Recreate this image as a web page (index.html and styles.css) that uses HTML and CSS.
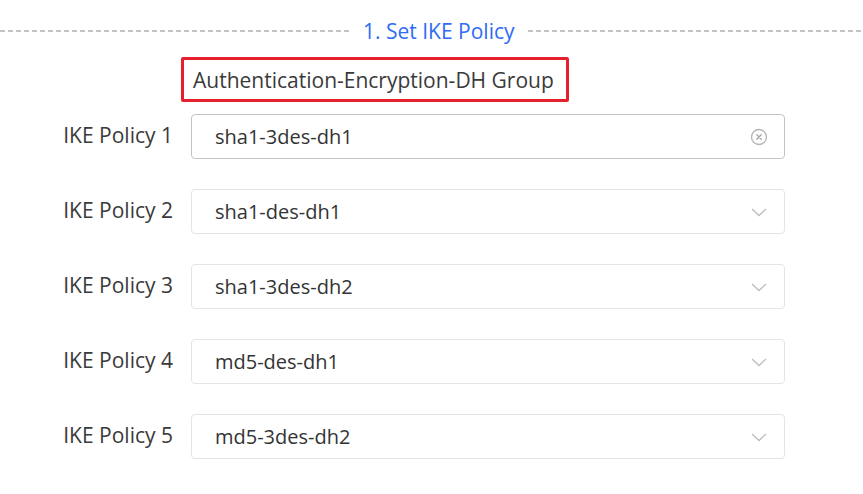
FILE: index.html
```html
<!DOCTYPE html>
<html>
<head>
<meta charset="utf-8">
<link rel="stylesheet" href="styles.css">
</head>
<body>
<div class="page">
  <div class="section-title">
    <span class="line line-left"></span>
    <span class="title-text">1. Set IKE Policy</span>
    <span class="line line-right"></span>
  </div>
  <div class="header-row">
    <div class="highlight">Authentication-Encryption-DH Group</div>
  </div>
  <div class="form">
    <div class="row">
      <label class="label">IKE Policy 1</label>
      <div class="select hover">
        <span class="value">sha1-3des-dh1</span>
        <svg class="icon" width="18" height="18" viewBox="0 0 18 18"><circle cx="9" cy="9" r="7.5" fill="none" stroke="#b4b4b4" stroke-width="1.3"/><path d="M6.8 6.8 L11.2 11.2 M11.2 6.8 L6.8 11.2" stroke="#a8a8a8" stroke-width="1.4" stroke-linecap="round"/></svg>
      </div>
    </div>
    <div class="row">
      <label class="label">IKE Policy 2</label>
      <div class="select">
        <span class="value">sha1-des-dh1</span>
        <svg class="icon" width="18" height="18" viewBox="0 0 18 18"><path d="M2 6 L9 12.5 L16 6" fill="none" stroke="#bdbdbd" stroke-width="1.3"/></svg>
      </div>
    </div>
    <div class="row">
      <label class="label">IKE Policy 3</label>
      <div class="select">
        <span class="value">sha1-3des-dh2</span>
        <svg class="icon" width="18" height="18" viewBox="0 0 18 18"><path d="M2 6 L9 12.5 L16 6" fill="none" stroke="#bdbdbd" stroke-width="1.3"/></svg>
      </div>
    </div>
    <div class="row">
      <label class="label">IKE Policy 4</label>
      <div class="select">
        <span class="value">md5-des-dh1</span>
        <svg class="icon" width="18" height="18" viewBox="0 0 18 18"><path d="M2 6 L9 12.5 L16 6" fill="none" stroke="#bdbdbd" stroke-width="1.3"/></svg>
      </div>
    </div>
    <div class="row">
      <label class="label">IKE Policy 5</label>
      <div class="select">
        <span class="value">md5-3des-dh2</span>
        <svg class="icon" width="18" height="18" viewBox="0 0 18 18"><path d="M2 6 L9 12.5 L16 6" fill="none" stroke="#bdbdbd" stroke-width="1.3"/></svg>
      </div>
    </div>
  </div>
</div>
</body>
</html>
```
FILE: styles.css
```css
* { box-sizing: border-box; }
html, body { margin: 0; padding: 0; background: #fff; }
body {
  font-family: "Open Sans", "Noto Sans", "Liberation Sans", sans-serif;
  color: #333;
  width: 863px;
  height: 494px;
  overflow: hidden;
}
.page { padding-top: 17px; }
.section-title {
  display: flex;
  align-items: center;
  height: 28px;
}
.line {
  height: 2px;
  background-image: linear-gradient(to right, #c4c4c4 0 5px, transparent 5px 8px);
  background-size: 8px 2px;
  background-repeat: repeat-x;
}
.line-left { width: 352px; }
.line-right { flex: 1; }
.title-text {
  color: #2f6bf5;
  font-size: 21px;
  padding: 0 13px 0 11px;
  white-space: nowrap;
}
.header-row {
  padding-left: 181px;
  margin-top: 12px;
}
.highlight {
  display: inline-flex;
  align-items: center;
  height: 45px;
  width: 388px;
  border: 3px solid #e3202b;
  border-radius: 2px;
  padding-left: 9px;
  font-size: 21px;
  color: #3a3a3a;
  white-space: nowrap;
}
.form {
  display: flex;
  flex-direction: column;
  gap: 30px;
  margin-top: 12px;
}
.row {
  display: flex;
  align-items: center;
  gap: 18px;
}
.label {
  width: 173px;
  text-align: right;
  font-size: 21px;
  color: #3a3a3a;
  padding-bottom: 4px;
}
.select {
  width: 594px;
  height: 45px;
  border: 1px solid #e2e4ea;
  border-radius: 4px;
  display: flex;
  align-items: center;
  justify-content: space-between;
  padding: 0 16px 0 23px;
}
.select.hover { border-color: #c4c4c4; }
.value {
  font-size: 20px;
  color: #333;
}
.icon { display: block; }
```
